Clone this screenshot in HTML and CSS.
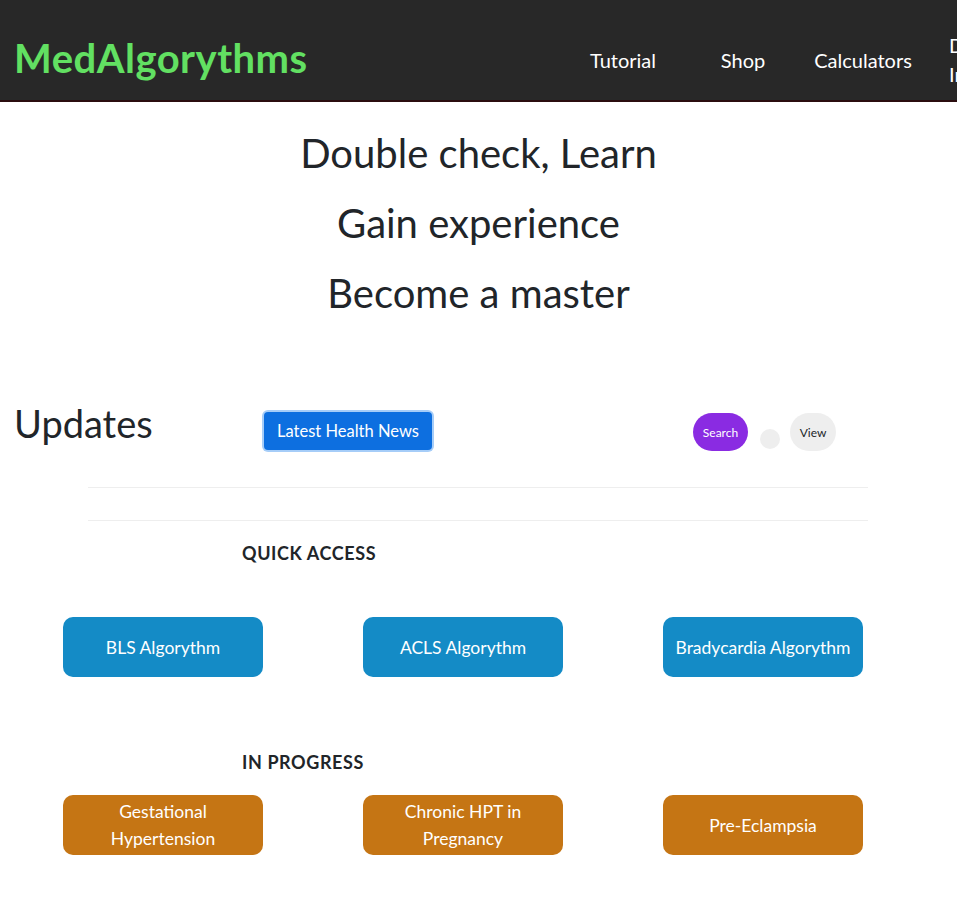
FILE: index.html
```html
<!DOCTYPE html>
<html lang="en">
<head>
<meta charset="utf-8">
<title>MedAlgorythms</title>
<link rel="stylesheet" href="styles.css">
</head>
<body>
<header class="navbar">
  <a class="brand" href="#">MedAlgorythms</a>
  <nav class="nav">
    <a class="nav-item" href="#">Tutorial</a>
    <a class="nav-item" href="#">Shop</a>
    <a class="nav-item" href="#">Calculators</a>
    <a class="nav-item nav-item-wrap" href="#">Drug<br>Info</a>
  </nav>
</header>

<section class="hero">
  <p class="hero-line">Double check, Learn</p>
  <p class="hero-line">Gain experience</p>
  <p class="hero-line">Become a master</p>
</section>

<section class="updates">
  <h2 class="updates-title">Updates</h2>
  <div class="updates-news">
    <button class="btn-news">Latest Health News</button>
  </div>
  <div class="updates-tools">
    <span class="pill pill-search">Search</span>
    <span class="dot"></span>
    <span class="pill pill-view">View</span>
  </div>
</section>

<hr class="divider divider-first">
<hr class="divider divider-second">

<section class="group">
  <h3 class="group-title">QUICK ACCESS</h3>
  <div class="tiles tiles-quick">
    <a class="tile tile-blue" href="#">BLS Algorythm</a>
    <a class="tile tile-blue" href="#">ACLS Algorythm</a>
    <a class="tile tile-blue" href="#">Bradycardia Algorythm</a>
  </div>
</section>

<section class="group group-progress">
  <h3 class="group-title">IN PROGRESS</h3>
  <div class="tiles tiles-progress">
    <a class="tile tile-orange" href="#">Gestational Hypertension</a>
    <a class="tile tile-orange" href="#">Chronic HPT in Pregnancy</a>
    <a class="tile tile-orange" href="#">Pre-Eclampsia</a>
  </div>
</section>
</body>
</html>
```

FILE: styles.css
```css
html, body {
  overflow-x: hidden;
}

body {
  margin: 0;
  font-family: "Lato", "Open Sans", "Liberation Sans", sans-serif;
  color: #212529;
  background: #ffffff;
  width: 957px;
}

a {
  text-decoration: none;
}

.navbar {
  display: flex;
  align-items: flex-start;
  height: 100px;
  background: #282828;
  border-bottom: 2px solid #2b0d0f;
  padding-left: 14px;
  white-space: nowrap;
}

.brand {
  flex-shrink: 0;
  width: 549px;
  margin-top: 34px;
  color: #62e062;
  font-size: 40px;
  line-height: 48px;
  font-weight: 700;
  letter-spacing: 0.5px;
}

.nav {
  display: flex;
  flex-shrink: 0;
  align-items: center;
  height: 70px;
  margin-top: 25px;
}

.nav-item {
  flex-shrink: 0;
  width: 120px;
  text-align: center;
  color: #ffffff;
  font-size: 20px;
  line-height: 29px;
}

.nav-item-wrap {
  text-align: left;
  padding-left: 26px;
  box-sizing: border-box;
  white-space: normal;
}

.hero {
  padding-top: 16px;
  text-align: center;
}

.hero-line {
  margin: 0;
  line-height: 70px;
  font-size: 40px;
  color: #212529;
}

.updates {
  display: flex;
  align-items: flex-start;
  margin-top: 72px;
}

.updates-title {
  margin: 0;
  width: 248px;
  padding-left: 14px;
  font-size: 38px;
  font-weight: 400;
  line-height: 46px;
}

.updates-news {
  width: 431px;
  padding-top: 12px;
}

.btn-news {
  display: block;
  margin-left: 2px;
  width: 168px;
  height: 38px;
  border: 0;
  border-radius: 4px;
  background: #0d6fe0;
  color: #ffffff;
  font-family: inherit;
  font-size: 16.5px;
  box-shadow: 0 0 0 2px #a6cdf8;
}

.updates-tools {
  display: flex;
  align-items: center;
  padding-top: 13px;
}

.pill {
  display: flex;
  align-items: center;
  justify-content: center;
  height: 38px;
  border-radius: 19px;
  font-size: 12px;
}

.pill-search {
  width: 55px;
  background: #8a2be2;
  color: #ffffff;
}

.dot {
  width: 20px;
  height: 20px;
  margin: 14px 10px 0 12px;
  border-radius: 50%;
  background: #eeeeee;
}

.pill-view {
  width: 46px;
  background: #eeeeee;
  color: #212529;
}

.divider {
  width: 780px;
  margin: 0 0 0 88px;
  border: 0;
  border-top: 1px solid #eeeeee;
}

.divider-first {
  margin-top: 36px;
}

.divider-second {
  margin-top: 32px;
}

.group {
  padding-top: 20px;
}

.group-title {
  margin: 0;
  padding-left: 242px;
  font-size: 18px;
  font-weight: 700;
  line-height: 24px;
  letter-spacing: 0.6px;
  color: #212529;
}

.tiles {
  display: grid;
  grid-template-columns: repeat(3, 300px);
  padding-left: 13px;
}

.tiles-quick {
  margin-top: 52px;
}

.tiles-progress {
  margin-top: 21px;
}

.group-progress {
  padding-top: 73px;
}

.tile {
  justify-self: center;
  display: flex;
  align-items: center;
  justify-content: center;
  width: 200px;
  height: 60px;
  box-sizing: border-box;
  padding: 0 10px;
  border-radius: 10px;
  color: #ffffff;
  font-size: 17.5px;
  line-height: 27px;
  text-align: center;
}

.tile-blue {
  background: #148bc6;
}

.tile-orange {
  background: #c57514;
}
```
